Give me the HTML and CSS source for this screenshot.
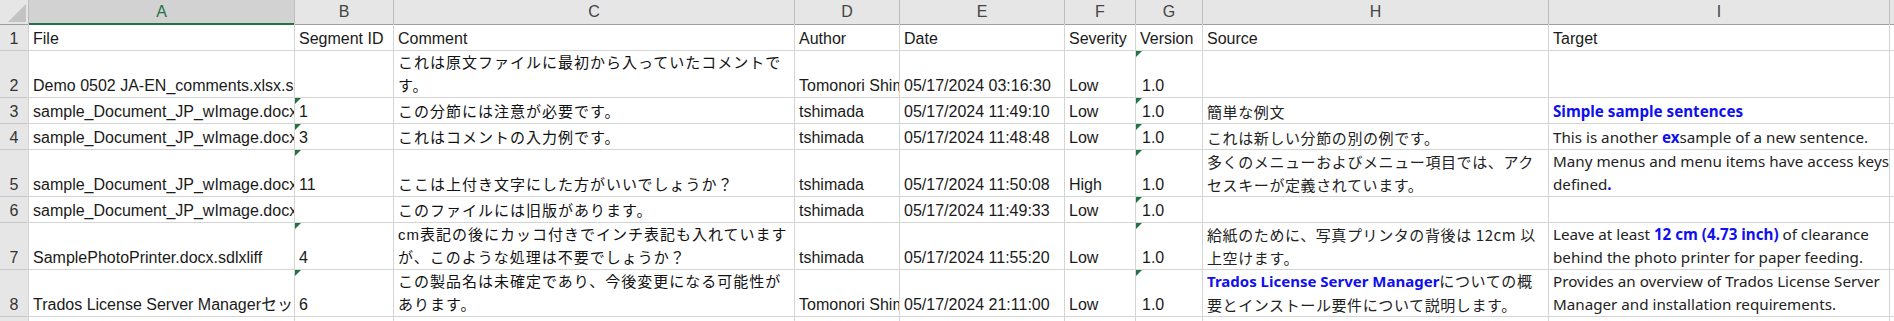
FILE: index.html
```html
<!DOCTYPE html>
<html lang="ja">
<head>
    <meta charset="UTF-8">
    <title>Comments export</title>
    <link rel="stylesheet" href="styles.css">
</head>
<body>
    <div class="sheet">
        <!-- cabecera de columnas -->
        <div class="corner">
            <svg width="28" height="24" viewBox="0 0 28 24"><polygon points="26,4 26,22 8,22" fill="#c3c3c3"/></svg>
        </div>
        <div class="col-head active">A</div>
        <div class="col-head">B</div>
        <div class="col-head">C</div>
        <div class="col-head">D</div>
        <div class="col-head">E</div>
        <div class="col-head">F</div>
        <div class="col-head">G</div>
        <div class="col-head">H</div>
        <div class="col-head">I</div>
        <div class="col-head"></div>

        <!-- fila 1 -->
        <div class="row-head">1</div>
        <div class="cell">File</div>
        <div class="cell">Segment ID</div>
        <div class="cell">Comment</div>
        <div class="cell">Author</div>
        <div class="cell">Date</div>
        <div class="cell">Severity</div>
        <div class="cell">Version</div>
        <div class="cell">Source</div>
        <div class="cell">Target</div>
        <div class="cell"></div>

        <!-- fila 2 -->
        <div class="row-head">2</div>
        <div class="cell">Demo 0502 JA-EN_comments.xlsx.sdlxliff</div>
        <div class="cell"></div>
        <div class="cell jp"><span>これは原文ファイルに最初から入っていたコメントで<br>す。</span></div>
        <div class="cell">Tomonori Shimada</div>
        <div class="cell">05/17/2024 03:16:30</div>
        <div class="cell">Low</div>
        <div class="cell flag num">1.0</div>
        <div class="cell src"></div>
        <div class="cell tgt"></div>
        <div class="cell"></div>

        <!-- fila 3 -->
        <div class="row-head">3</div>
        <div class="cell">sample_Document_JP_wImage.docx.sdlxliff</div>
        <div class="cell flag">1</div>
        <div class="cell jp">この分節には注意が必要です。</div>
        <div class="cell">tshimada</div>
        <div class="cell">05/17/2024 11:49:10</div>
        <div class="cell">Low</div>
        <div class="cell flag num">1.0</div>
        <div class="cell src">簡単な例文</div>
        <div class="cell tgt"><span><b class="blue">Simple sample sentences</b></span></div>
        <div class="cell"></div>

        <!-- fila 4 -->
        <div class="row-head">4</div>
        <div class="cell">sample_Document_JP_wImage.docx.sdlxliff</div>
        <div class="cell flag">3</div>
        <div class="cell jp">これはコメントの入力例です。</div>
        <div class="cell">tshimada</div>
        <div class="cell">05/17/2024 11:48:48</div>
        <div class="cell">Low</div>
        <div class="cell flag num">1.0</div>
        <div class="cell src">これは新しい分節の別の例です。</div>
        <div class="cell tgt"><span>This is another <b class="blue">ex</b>sample of a new sentence.</span></div>
        <div class="cell"></div>

        <!-- fila 5 -->
        <div class="row-head">5</div>
        <div class="cell">sample_Document_JP_wImage.docx.sdlxliff</div>
        <div class="cell flag">11</div>
        <div class="cell jp">ここは上付き文字にした方がいいでしょうか？</div>
        <div class="cell">tshimada</div>
        <div class="cell">05/17/2024 11:50:08</div>
        <div class="cell">High</div>
        <div class="cell flag num">1.0</div>
        <div class="cell src"><span>多くのメニューおよびメニュー項目では、アク<br>セスキーが定義されています。</span></div>
        <div class="cell tgt"><span>Many menus and menu items have access keys<br>defined<b class="blue">.</b></span></div>
        <div class="cell"></div>

        <!-- fila 6 -->
        <div class="row-head">6</div>
        <div class="cell">sample_Document_JP_wImage.docx.sdlxliff</div>
        <div class="cell"></div>
        <div class="cell jp">このファイルには旧版があります。</div>
        <div class="cell">tshimada</div>
        <div class="cell">05/17/2024 11:49:33</div>
        <div class="cell">Low</div>
        <div class="cell flag num">1.0</div>
        <div class="cell src"></div>
        <div class="cell tgt"></div>
        <div class="cell"></div>

        <!-- fila 7 -->
        <div class="row-head">7</div>
        <div class="cell">SamplePhotoPrinter.docx.sdlxliff</div>
        <div class="cell flag">4</div>
        <div class="cell jp"><span>cm表記の後にカッコ付きでインチ表記も入れています<br>が、このような処理は不要でしょうか？</span></div>
        <div class="cell">tshimada</div>
        <div class="cell">05/17/2024 11:55:20</div>
        <div class="cell">Low</div>
        <div class="cell flag num">1.0</div>
        <div class="cell src"><span>給紙のために、写真プリンタの背後は 12cm 以<br>上空けます。</span></div>
        <div class="cell tgt"><span>Leave at least <b class="blue">12 cm (4.73 inch)</b> of clearance<br>behind the photo printer for paper feeding.</span></div>
        <div class="cell"></div>

        <!-- fila 8 -->
        <div class="row-head">8</div>
        <div class="cell">Trados License Server Managerセットアップガイド.docx.sdlxliff</div>
        <div class="cell flag">6</div>
        <div class="cell jp"><span>この製品名は未確定であり、今後変更になる可能性が<br>あります。</span></div>
        <div class="cell">Tomonori Shimada</div>
        <div class="cell">05/17/2024 21:11:00</div>
        <div class="cell">Low</div>
        <div class="cell flag num">1.0</div>
        <div class="cell src"><span><b class="blue">Trados License Server Manager</b>についての概<br>要とインストール要件について説明します。</span></div>
        <div class="cell tgt"><span>Provides an overview of Trados License Server<br>Manager and installation requirements.</span></div>
        <div class="cell"></div>

        <!-- fila 9 (cortada) -->
        <div class="row-head"></div>
        <div class="cell"></div>
        <div class="cell"></div>
        <div class="cell"></div>
        <div class="cell"></div>
        <div class="cell"></div>
        <div class="cell"></div>
        <div class="cell"></div>
        <div class="cell"></div>
        <div class="cell"></div>
        <div class="cell"></div>
    </div>
</body>
</html>
```

FILE: styles.css
```css
/* Hoja de calculo */
body {
    margin: 0;
    background-color: #fff;
    overflow: hidden;
    font-family: 'Liberation Sans', Arial, 'Noto Sans CJK JP', sans-serif;
    font-size: 16px;
    color: #1a1a1a;
}

.sheet {
    display: grid;
    grid-template-columns: 28px 265px 98px 400px 104px 164px 70px 66px 345px 340px 1fr;
    grid-template-rows: 24px 25px 46px 25px 25px 46px 25px 46px 46px 4px;
    gap: 1px;
    background-color: #d4d4d4;
    height: 321px;
}

/* Cabeceras */
.corner {
    background-color: #e6e6e6;
    box-shadow: 1px 0 0 #bdbdbd, 0 1px 0 #9f9f9f;
}

.corner svg {
    display: block;
}

.col-head {
    background-color: #e6e6e6;
    color: #444;
    font-size: 16px;
    line-height: 24px;
    text-align: center;
    box-shadow: 1px 0 0 #bdbdbd, 0 1px 0 #9f9f9f;
}

.col-head.active {
    background-color: #d2d2d2;
    color: #217346;
    box-shadow: 1px 0 0 #bdbdbd, 0 1px 0 #217346, inset 0 -1px 0 #217346;
}

.row-head {
    background-color: #e6e6e6;
    color: #333;
    display: flex;
    align-items: flex-end;
    justify-content: center;
    line-height: 23px;
    box-shadow: 0 1px 0 #c8c8c8;
}

/* Celdas */
.cell {
    position: relative;
    display: flex;
    align-items: flex-end;
    padding: 0 4px;
    background-color: #fff;
    line-height: 23px;
    white-space: nowrap;
    overflow: hidden;
}

.cell.num {
    padding-left: 6px;
}

.jp {
    font-size: 15px;
    letter-spacing: 1px;
    color: #111;
}

.src {
    font-family: 'Noto Sans CJK JP', 'Noto Sans', sans-serif;
    font-size: 15px;
    letter-spacing: 0.6px;
    color: #222;
}

.src .blue {
    font-family: 'Noto Sans', sans-serif;
    letter-spacing: 0;
}

.tgt {
    font-family: 'Noto Sans', sans-serif;
    font-size: 15.2px;
    color: #222;
}

.blue {
    color: #1010ee;
    font-weight: bold;
}

/* Indicador verde de la esquina */
.flag::before {
    content: '';
    position: absolute;
    top: 0;
    left: 0;
    border-top: 6px solid #217346;
    border-right: 6px solid transparent;
}
```
